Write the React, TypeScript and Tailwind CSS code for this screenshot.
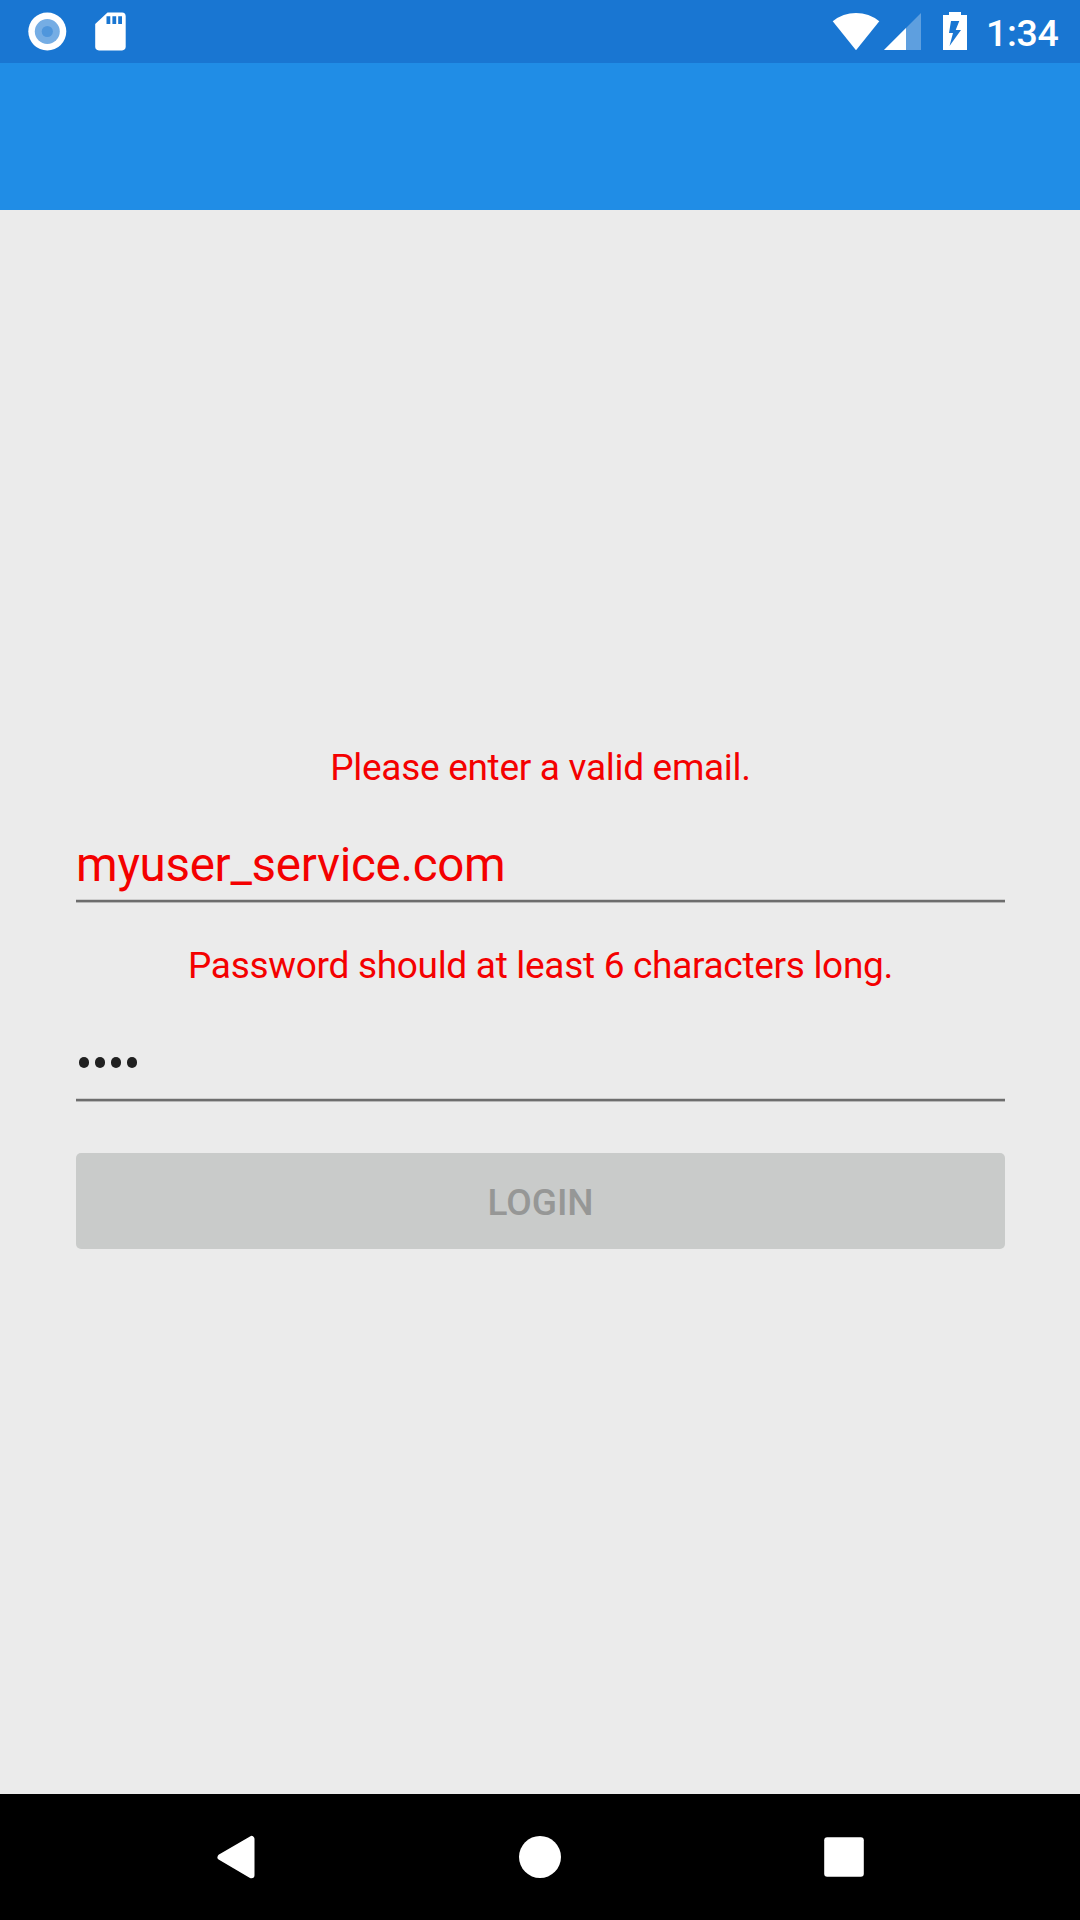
function FieldLine() {
  return (
    <div className="h-1 shrink-0 border-t border-b border-t-[#cdcdcd] border-b-[#b7b7b7] bg-[#6d6d6d]" />
  );
}

export default function App() {
  return (
    <div className="flex h-[1920px] w-[1080px] flex-col overflow-hidden bg-[#ebebeb] font-[Roboto,sans-serif] text-[#f40000]">
      <header className="flex h-[63px] shrink-0 items-center bg-[#1976d2] text-white">
        <svg width="140" height="63" viewBox="0 0 140 63" fill="white">
          <circle cx="47.3" cy="31.5" r="19" />
          <circle cx="47.3" cy="31.5" r="12.5" fill="#75ade4" />
          <circle cx="47.3" cy="31.5" r="5.6" fill="#4f96dc" />
          <path d="M107.5 12.6H122Q125.7 12.6 125.7 16.4V46.6Q125.7 50.4 122 50.4H99Q95.2 50.4 95.2 46.6V24Z" />
          <path d="M106.5 16.2h3.8v7.8h-3.8zm5.9 0h3.8v7.8h-3.8zm5.8 0h3.8v7.8h-3.8z" fill="#1976d2" />
        </svg>
        <svg className="ml-[687px] shrink-0" width="159" height="63" viewBox="827 0 159 63" fill="white">
          <path d="M832.7 21.2Q843 13 856 13T879.3 21.2L856 50.2Z" />
          <path d="M884 50L921 13V50Z" fillOpacity=".3" />
          <path d="M884 50L906 28V50Z" />
          <path d="M949 12h12v3h6v35h-24V15h6z" />
          <path d="M951 21h8.3l-3.6 9h5.3L949.5 46L953 33h-4z" fill="#1976d2" />
        </svg>
        <span className="mt-[3px] whitespace-nowrap text-[37.5px] leading-[40px] font-medium tracking-[-0.3px]">1:34</span>
      </header>
      <div className="h-[147px] shrink-0 bg-[#208de6]" />
      <main className="flex flex-1 flex-col pr-[75px] pl-[76px] pt-[534px]">
        <p className="h-[48px] text-center text-[37px] leading-[48px] tracking-[-0.3px]">Please enter a valid email.</p>
        <div className="mt-[41px] h-[66px] text-[47.5px] leading-[65px] tracking-[-0.28px]">myuser_service.com</div>
        <FieldLine />
        <p className="mt-[39px] h-[48px] text-center text-[37px] leading-[48px] tracking-[-0.3px]">Password should at least 6 characters long.</p>
        <div className="flex h-[108px] items-start gap-[6px] pt-[67px] pl-[3px]">
          {[0, 1, 2, 3].map((i) => (
            <span key={i} className="h-[11px] w-[10px] rounded-full bg-[#202020]" />
          ))}
        </div>
        <FieldLine />
        <button className="mt-[51px] h-[96px] shrink-0 rounded-[5px] bg-[#c9cbca] pt-[3px] text-[37px] font-medium text-[#969796]">LOGIN</button>
      </main>
      <nav className="h-[126px] shrink-0 bg-black">
        <svg width="1080" height="126" viewBox="0 0 1080 126" fill="white">
          <path d="M220.5 63.2L251.5 45V81.3Z" stroke="white" strokeWidth="6" strokeLinejoin="round" />
          <circle cx="540" cy="63" r="21" />
          <rect x="824.2" y="43.2" width="39.6" height="39.6" rx="3" />
        </svg>
      </nav>
    </div>
  );
}
